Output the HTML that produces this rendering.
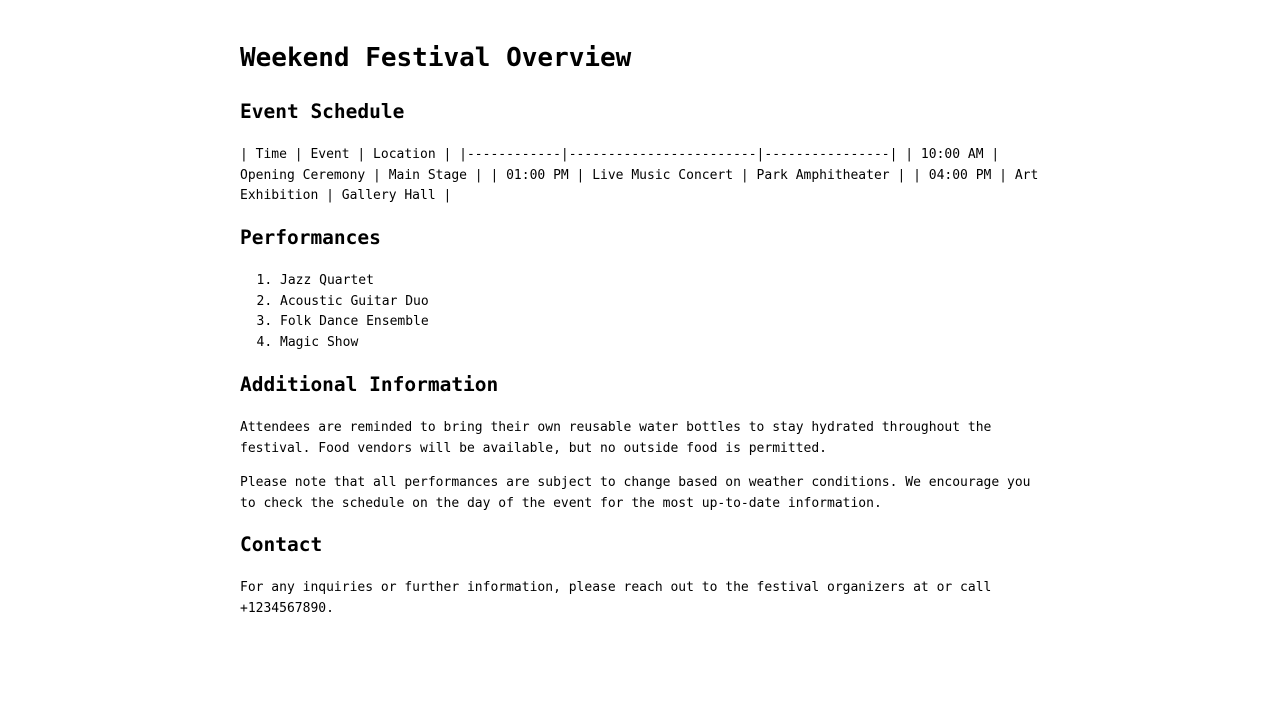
<!DOCTYPE html>
<html><head><meta charset="utf-8"><style>
html,body{margin:0;padding:0;background:#fff;color:#000;}
body{font-family:"DejaVu Sans Mono","Liberation Mono",monospace;font-size:13px;line-height:20.7px;}
.c{width:800px;margin:0 auto;padding-top:43px;}
h1{font-size:26px;line-height:31px;margin:0 0 26px;font-weight:bold;}
h2{font-size:19.5px;line-height:23.4px;margin:19px 0 21.5px;font-weight:bold;}
p{margin:13.5px 0;}
ol{margin:21.5px 0 19.5px;padding-left:40px;}
</style></head><body><div class="c">
<h1>Weekend Festival Overview</h1>
<h2>Event Schedule</h2>
<p>| Time | Event | Location | |------------|------------------------|----------------| | 10:00 AM | Opening Ceremony | Main Stage | | 01:00 PM | Live Music Concert | Park Amphitheater | | 04:00 PM | Art Exhibition | Gallery Hall |</p>
<h2>Performances</h2>
<ol><li>Jazz Quartet</li><li>Acoustic Guitar Duo</li><li>Folk Dance Ensemble</li><li>Magic Show</li></ol>
<h2>Additional Information</h2>
<p>Attendees are reminded to bring their own reusable water bottles to stay hydrated throughout the festival. Food vendors will be available, but no outside food is permitted.</p>
<p>Please note that all performances are subject to change based on weather conditions. We encourage you to check the schedule on the day of the event for the most up-to-date information.</p>
<h2>Contact</h2>
<p>For any inquiries or further information, please reach out to the festival organizers at or call +1234567890.</p>
</div></body></html>
